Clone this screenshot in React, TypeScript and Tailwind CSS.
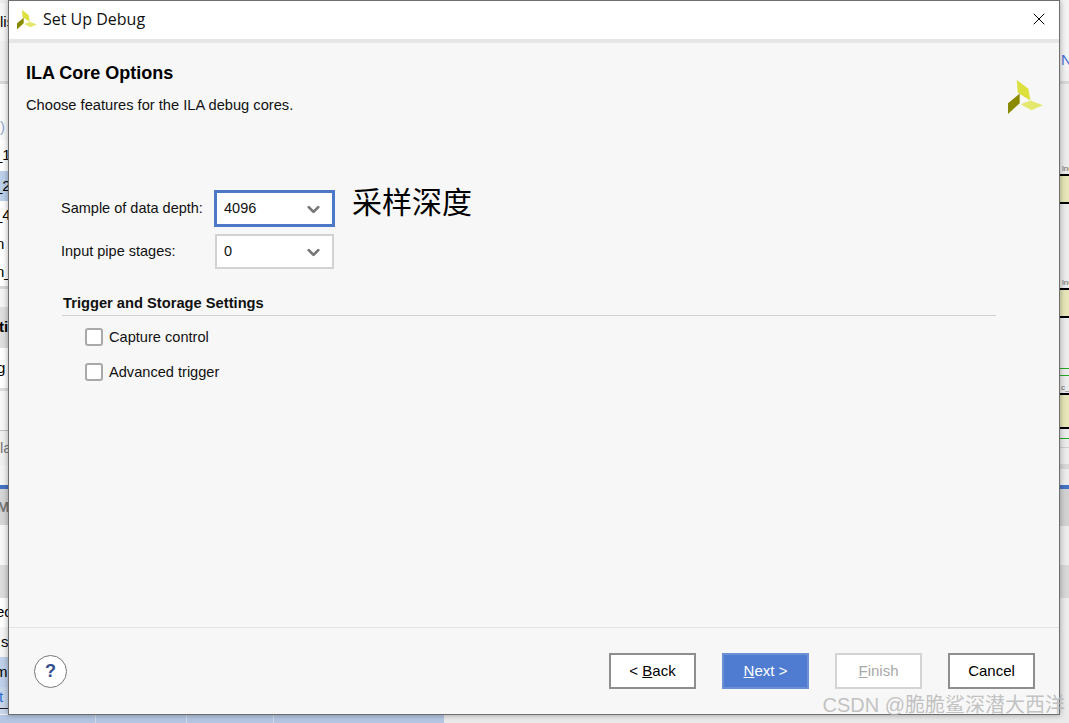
import React from 'react';
import { ChevronDown, X } from 'lucide-react';

const XilinxLogo: React.FC<{ className?: string }> = ({ className }) => (
  <svg viewBox="0 0 36 36" className={className}>
    <polygon points="9,0 21,9 23,21 10,13" fill="#dbe03c" />
    <polygon points="12,14 12,24 0,35 0,24" fill="#8a8a00" />
    <polygon points="13,25 23,21 36,26 24,31" fill="#e4e86e" />
  </svg>
);

interface Row {
  h: number;
  bg: string;
  text?: string;
  bold?: boolean;
  color?: string;
  shift?: number;
  small?: boolean;
}

// slices of the window behind the dialog, text runs under the dialog and gets clipped
const EdgeRow: React.FC<Row> = ({ h, bg, text, bold, color, shift, small }) => (
  <div
    className={`flex items-center justify-start overflow-hidden whitespace-nowrap ${small ? 'text-[8px]' : 'text-[15px]'} ${bold ? 'font-bold' : ''}`}
    style={{ height: h, background: bg, color: color || '#000' }}
  >
    {text && <span style={{ marginLeft: shift || 0 }}>{text}</span>}
  </div>
);

const leftRows: Row[] = [
  { h: 3, bg: '#ececec' },
  { h: 38, bg: '#f6f6f6', text: 'lis' },
  { h: 40, bg: '#f0f0f0' },
  { h: 3, bg: '#d8d8d8' },
  { h: 34, bg: '#fafafa' },
  { h: 18, bg: '#fafafa', text: ')', color: '#8ea6cc' },
  { h: 4, bg: '#fafafa' },
  { h: 31, bg: '#ffffff', text: '_1', shift: -6 },
  { h: 30, bg: '#bcd0ea', text: '_2', shift: -6 },
  { h: 29, bg: '#ffffff', text: '_4', shift: -6 },
  { h: 29, bg: '#ffffff', text: 'n', shift: -4 },
  { h: 27, bg: '#ffffff', text: 'n_', shift: -4 },
  { h: 3, bg: '#d8d8d8' },
  { h: 18, bg: '#f4f4f4' },
  { h: 41, bg: '#dedede', text: 'ti', bold: true, shift: -1 },
  { h: 40, bg: '#ffffff', text: 'g', shift: -3 },
  { h: 3, bg: '#dcdcdc' },
  { h: 39, bg: '#f7f7f7' },
  { h: 1, bg: '#bdbdbd' },
  { h: 34, bg: '#f0f0f0', text: 'la', color: '#777' },
  { h: 20, bg: '#f4f4f4' },
  { h: 4, bg: '#4472c4' },
  { h: 36, bg: '#d6d6d6', text: 'M', bold: true, color: '#777', shift: -3 },
  { h: 40, bg: '#f7f7f7' },
  { h: 33, bg: '#dcdcdc' },
  { h: 29, bg: '#ffffff', text: 'ed', shift: -4 },
  { h: 30, bg: '#f6f6f6', text: 's', shift: 1 },
  { h: 30, bg: '#bed0ea', text: 'm', shift: -5 },
  { h: 21, bg: '#c8d6ec', text: 't', color: '#2a6fd0', shift: -1 },
  { h: 1, bg: '#222222' },
  { h: 5, bg: '#c8d6ec' },
];

const rightRows: Row[] = [
  { h: 50, bg: '#f3f3f3' },
  { h: 20, bg: '#f4f4f4', text: 'N', color: '#3f6fd8', shift: 1 },
  { h: 11, bg: '#f0f0f0' },
  { h: 3, bg: '#d8d8d8' },
  { h: 80, bg: '#ececec' },
  { h: 10, bg: '#ececec', text: 'lnc', color: '#666', small: true, shift: 2 },
  { h: 2, bg: '#000000' },
  { h: 26, bg: '#e6e6b8' },
  { h: 2, bg: '#000000' },
  { h: 74, bg: '#ececec' },
  { h: 10, bg: '#ececec', text: 'lnc', color: '#666', small: true, shift: 2 },
  { h: 2, bg: '#000000' },
  { h: 26, bg: '#e6e6b8' },
  { h: 2, bg: '#000000' },
  { h: 50, bg: '#ececec' },
  { h: 1, bg: '#22aa22' },
  { h: 6, bg: '#ececec' },
  { h: 1, bg: '#22aa22' },
  { h: 7, bg: '#ececec' },
  { h: 10, bg: '#ececec', text: 'c_8', color: '#666', small: true, shift: 1 },
  { h: 2, bg: '#000000' },
  { h: 32, bg: '#e6e6b8' },
  { h: 2, bg: '#000000' },
  { h: 9, bg: '#ececec' },
  { h: 1, bg: '#22aa22' },
  { h: 8, bg: '#ececec' },
  { h: 1, bg: '#d0d0d0' },
  { h: 16, bg: '#ececec' },
  { h: 5, bg: '#d8d8d8' },
  { h: 16, bg: '#ececec' },
  { h: 4, bg: '#4472c4' },
  { h: 37, bg: '#d2d2d2' },
  { h: 39, bg: '#ececec' },
  { h: 33, bg: '#d8d8d8' },
  { h: 125, bg: '#ececec' },
];

const Select: React.FC<{ value: string; focused?: boolean }> = ({ value, focused }) => (
  <div
    className={`flex items-center justify-between bg-white pl-[7px] text-[14.5px] text-[#111] ${
      focused ? 'w-[121px] h-[37px] pr-[9px] border-[3px] border-[#4d78c8]' : 'w-[119px] h-[35px] pr-[9px] border-2 border-[#d2d2d2]'
    }`}
  >
    <span>{value}</span>
    <ChevronDown className="w-[19px] h-[19px] mt-[1px] text-[#777]" strokeWidth={3.5} />
  </div>
);

const Check: React.FC<{ label: string }> = ({ label }) => (
  <div className="flex items-center gap-[6px] h-[18px] text-[14.6px] text-[#111]">
    <div className="w-[18px] h-[18px] bg-white border-2 border-[#a9a9a9] rounded-[3px]" />
    <span className="mt-[1px]">{label}</span>
  </div>
);

const Btn: React.FC<{ className: string; children: React.ReactNode }> = ({ className, children }) => (
  <button className={`w-[87px] h-[36px] flex items-center justify-center text-[15px] border-2 ${className}`}>
    {children}
  </button>
);

export default function App() {
  return (
    <div className="w-[1069px] h-[723px] overflow-hidden bg-[#eeeeee] font-['Liberation_Sans',Arial,sans-serif]">
      <div className="flex h-[715px]">
        {/* window behind, left edge */}
        <div className="w-[8px] shrink-0 overflow-hidden">
          {leftRows.map((r, i) => (
            <EdgeRow key={i} {...r} />
          ))}
        </div>

        {/* dialog */}
        <div className="relative w-[1052px] shrink-0 flex flex-col bg-[#f7f7f7] border border-[#6e6e6e] shadow-[0_0_6px_rgba(0,0,0,0.35)] z-10">
          <div className="flex items-center justify-between h-[38px] shrink-0 bg-white pl-[8px] pr-[10px]">
            <div className="flex items-center gap-[6px]">
              <XilinxLogo className="w-[20px] h-[20px]" />
              <span className="-mt-[2px] font-['Open_Sans',sans-serif] text-[16px] text-[#111]">Set Up Debug</span>
            </div>
            <X className="w-[20px] h-[20px] -mt-[2px] text-black" strokeWidth={1.2} />
          </div>
          <div className="h-[4px] shrink-0 bg-[#e6e6e6]" />

          <div className="flex-1 flex flex-col">
            {/* header */}
            <div className="flex justify-between h-[147px] pl-[17px] pr-[16px] pt-[19px]">
              <div>
                <h1 className="text-[18px] leading-[22px] font-bold text-black">ILA Core Options</h1>
                <p className="mt-[12px] text-[14.66px] leading-[18px] text-[#111]">Choose features for the ILA debug cores.</p>
              </div>
              <XilinxLogo className="w-[35px] h-[35px] mt-[18px]" />
            </div>

            {/* form */}
            <div className="pl-[52px] pr-[63px]">
              <div className="flex items-center h-[37px]">
                <span className="w-[153px] text-[14.5px] text-[#111]">Sample of data depth:</span>
                <Select value="4096" focused />
                <span className="ml-[17px] -mt-[18px] text-[30px] leading-none text-black font-['Noto_Sans_CJK_SC',sans-serif]">采样深度</span>
              </div>
              <div className="flex items-center h-[35px] mt-[7px]">
                <span className="w-[154px] text-[14.5px] text-[#111]">Input pipe stages:</span>
                <Select value="0" />
              </div>

              <div className="mt-[25px] ml-[1px] pb-[3px] pl-[1px] border-b border-[#cfcfcf] text-[14.7px] leading-[18px] font-bold text-[#111]">
                Trigger and Storage Settings
              </div>
              <div className="mt-[12px] ml-[24px] flex flex-col gap-[17px]">
                <Check label="Capture control" />
                <Check label="Advanced trigger" />
              </div>
            </div>
          </div>

          {/* footer */}
          <div className="h-[87px] shrink-0 border-t border-[#e4e4e4] flex items-center justify-between pl-[25px] pr-[24px]">
            <div className="w-[33px] h-[33px] rounded-full bg-white border border-[#777] flex items-center justify-center text-[18px] font-bold text-[#34508c]">
              ?
            </div>
            <div className="flex gap-[26px]">
              <Btn className="bg-white border-[#8e8e8e] text-black">
                &lt;&nbsp;<span className="underline">B</span>ack
              </Btn>
              <Btn className="bg-[#4f7cd0] border-[#6b90d6] text-white">
                <span className="underline">N</span>ext &gt;
              </Btn>
              <Btn className="bg-white border-[#d4d4d4] text-[#a8a8a8]">
                <span className="underline">F</span>inish
              </Btn>
              <Btn className="bg-white border-[#8e8e8e] text-black">Cancel</Btn>
            </div>
          </div>

          {/* watermark */}
          <div className="absolute right-[-6px] bottom-[-3px] text-[20px] leading-[24px] whitespace-nowrap text-[#b4b4b4]/80 font-['Liberation_Sans','Noto_Sans_CJK_SC',sans-serif]">
            CSDN @脆脆鲨深潜大西洋
          </div>
        </div>

        {/* window behind, right edge */}
        <div className="w-[9px] shrink-0 overflow-hidden">
          {rightRows.map((r, i) => (
            <EdgeRow key={i} {...r} />
          ))}
        </div>
      </div>

      {/* bottom edge of the window behind */}
      <div className="flex h-[8px]">
        <div className="w-[96px] bg-[#b4c6e2] border-r border-[#d4dcea]" />
        <div className="w-[91px] bg-[#b4c6e2] border-r border-[#d4dcea]" />
        <div className="w-[87px] bg-[#b4c6e2] border-r border-[#d4dcea]" />
        <div className="w-[170px] bg-[#b4c6e2]" />
        <div className="flex-1 bg-[#eaeaea]" />
      </div>
    </div>
  );
}
